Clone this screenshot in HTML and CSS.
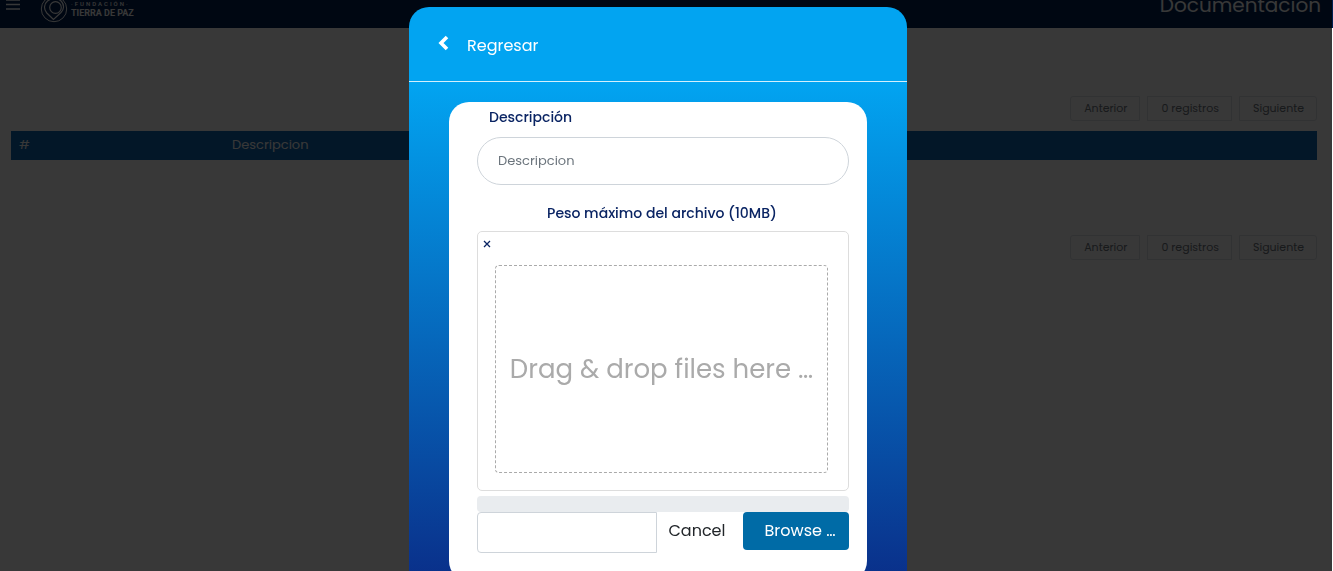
FILE: index.html
```html
<!DOCTYPE html>
<html lang="es">
<head>
<meta charset="utf-8">
<title>Documentación</title>
<link rel="stylesheet" href="styles.css">
</head>
<body>
<div class="page">
  <header class="topbar">
    <button class="menu" type="button" aria-label="Menú">
      <svg width="14" height="12" viewBox="0 0 14 12" stroke="currentColor" stroke-width="1.600"><path d="M0 1h14M0 5.500h14M0 10h14"/></svg>
    </button>
    <a class="brand" href="#">
      <svg width="28" height="28" viewBox="0 0 28 28" fill="none" stroke="currentColor">
        <circle cx="14" cy="14" r="12.700" stroke-width="1"/>
        <circle cx="15.500" cy="12.500" r="5.800" stroke-width="1.200"/>
        <path d="M13.500 24.500 6.800 18C3.500 14.500 3.800 9 7.500 6c4.500-3.500 11-3 14 .5 3 3.500 2.500 8-.5 11z" stroke-width="1.200"/>
      </svg>
      <span class="brand-text"><span class="brand-small">·FUNDACIÓN·</span><span class="brand-name">TIERRA DE PAZ</span></span>
    </a>
    <h1 class="title">Documentación</h1>
  </header>
  <main class="content">
    <nav class="pager" aria-label="Paginación superior">
      <button type="button">Anterior</button><button type="button">0 registros</button><button type="button">Siguiente</button>
    </nav>
    <table class="records">
      <thead><tr><th class="col-number">#</th><th>Descripcion</th></tr></thead>
    </table>
    <nav class="pager pager-bottom" aria-label="Paginación inferior">
      <button type="button">Anterior</button><button type="button">0 registros</button><button type="button">Siguiente</button>
    </nav>
  </main>
</div>
<div class="backdrop">
  <section class="modal" role="dialog" aria-label="Agregar documento">
    <div class="modal-head">
      <button class="back" type="button">
        <svg width="12" height="16" viewBox="0 0 12 16" fill="none" stroke="currentColor" stroke-width="3.600"><path d="M10 2 4 8l6 6"/></svg>
        <span>Regresar</span>
      </button>
    </div>
    <div class="modal-body">
      <form class="card">
        <label class="label" for="desc">Descripción</label>
        <input class="text" id="desc" type="text" placeholder="Descripcion">
        <label class="label label-center" for="file-name">Peso máximo del archivo (10MB)</label>
        <div class="preview">
          <button class="close" type="button" aria-label="Cerrar"><svg width="8" height="8" viewBox="0 0 8 8" stroke="currentColor" stroke-width="1.300"><path d="m1 1 6 6M7 1 1 7"/></svg></button>
          <div class="drop">Drag &amp; drop files here …</div>
        </div>
        <div class="progress"></div>
        <div class="actions">
          <input class="file-name" id="file-name" type="text">
          <button class="cancel" type="button">Cancel</button>
          <button class="browse" type="button">Browse …</button>
        </div>
      </form>
    </div>
  </section>
</div>
</body>
</html>
```
FILE: styles.css
```css
* { box-sizing: border-box; }
body {
  margin: 0;
  background: #fff;
  font-family: Poppins, Inter, "Open Sans", sans-serif;
  overflow: hidden;
}
button, input { font: inherit; }
button { cursor: pointer; }

.page { min-height: 100vh; }
.topbar {
  display: flex;
  align-items: center;
  height: 64px;
  margin-top: -36px;
  padding: 18px 12px 0 6px;
  background: #002052;
  color: #fff;
}
.menu { display: flex; padding: 0; border: 0; background: none; color: #fff; }
.brand {
  display: flex;
  align-items: center;
  gap: 3px;
  margin-left: 20px;
  padding-top: 8px;
  color: #fff;
  text-decoration: none;
}
.brand-text { display: flex; flex-direction: column; font-family: Roboto, sans-serif; }
.brand-small { font-size: 6px; line-height: 8px; font-weight: 500; letter-spacing: 2px; }
.brand-name { font-size: 9px; line-height: 10px; font-weight: 700; }
.title { margin: 0 0 0 auto; font-size: 20px; line-height: 28px; font-weight: 400; }

.content { padding: 68px 16px 0 11px; }
.pager { display: flex; justify-content: flex-end; gap: 7px; }
.pager button {
  height: 25px;
  padding: 0 12px 0 13px;
  border: 1px solid #dee2e6;
  background: #fff;
  color: #6c757d;
  font-size: 11px;
}
.pager button:first-child { border-radius: 3px 0 0 3px; }
.pager button:last-child { border-radius: 0 3px 3px 0; }
.pager-bottom { margin-top: 75px; }
.records {
  width: 100%;
  margin-top: 10px;
  border-collapse: collapse;
  background: #0f69b4;
  color: #fff;
}
.records th { padding: 4px 8px 5px; font-size: 13px; line-height: 20px; font-weight: 400; text-align: left; }
.records .col-number { width: 213px; }

.backdrop {
  position: fixed;
  inset: 0 1px 0 0;
  padding: 7px 16px 0 0;
  background: rgba(0, 0, 0, .78);
  overflow: hidden;
}
.modal { width: 100%; max-width: 498px; margin: 0 auto; border-radius: 20px; overflow: hidden; }
.modal-head { padding: 22px 28px; border-bottom: 1px solid #d3f0fd; background: #02a4f1; }
.back {
  display: flex;
  align-items: center;
  gap: 18px;
  height: 30px;
  padding: 0;
  border: 0;
  background: none;
  color: #fff;
  font-size: 16px;
}
.back svg { margin-bottom: 3px; }
.back span { padding-top: 3px; }
.modal-body { padding: 20px 40px; background: linear-gradient(#02a4f1, #0a2a85); }
.card { padding: 4px 18px 28px 28px; border-radius: 20px; background: #fff; color: #0a2463; }
.label { display: block; padding-left: 12px; font-size: 14px; line-height: 22px; font-weight: 500; }
.label-center { margin-top: 17px; padding: 0 2px 0 0; text-align: center; }
.text {
  display: block;
  width: 100%;
  height: 48px;
  margin-top: 9px;
  padding: 0 20px;
  border: 1px solid #ced4da;
  border-radius: 24px;
  font-size: 13px;
}
.text::placeholder { color: #6c757d; opacity: 1; }
.preview { margin-top: 7px; padding: 4px 20px 17px 17px; border: 1px solid #ddd; border-radius: 5px; }
.close { display: flex; align-items: center; height: 16px; margin-left: -12px; padding: 0; border: 0; background: none; color: #0a2463; }
.drop {
  display: flex;
  align-items: center;
  justify-content: center;
  height: 208px;
  margin-top: 13px;
  border: 1px dashed #aaa;
  border-radius: 4px;
  color: #aaa;
  font-size: 26px;
}
.progress { height: 16px; margin-top: 5px; border-radius: 4px; background: #e9ecef; }
.actions { display: flex; align-items: flex-start; }
.file-name { flex: 1; min-width: 0; height: 41px; border: 1px solid #ced4da; border-radius: 4px 0 0 4px; }
.cancel, .browse { height: 38px; padding: 0 0 2px; border: 0; font-size: 16px; }
.cancel { width: 80px; margin-right: 6px; background: none; color: #212529; }
.browse { width: 106px; padding-left: 8px; border-radius: 4px; background: #006ba6; color: #fff; }
```
